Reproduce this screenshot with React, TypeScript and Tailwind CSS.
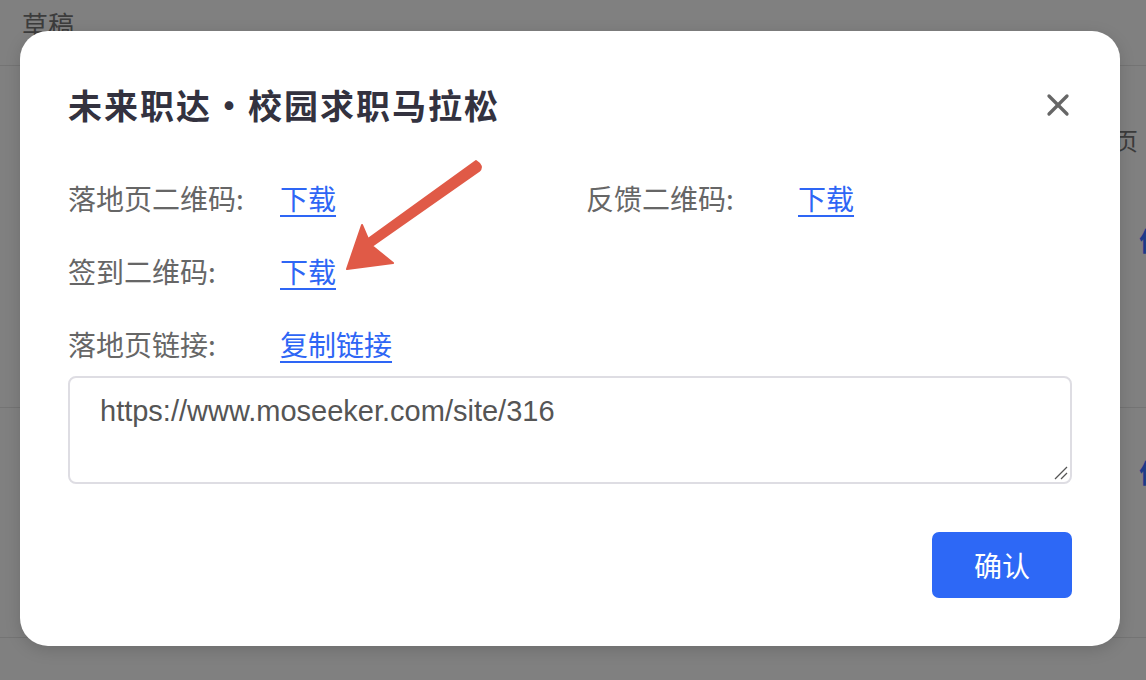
import { X } from "lucide-react";

const cn = '"Noto Sans CJK SC", "Liberation Sans", sans-serif';

const Row = ({ label, link }: { label: string; link: string }) => (
  <div className="flex items-center h-[40px]">
    <span className="w-[212px] text-[28px] text-[#666]">{label}</span>
    <a href="#" className="text-[28px] text-[#2e66f5] underline underline-offset-[5px] decoration-[2px]">
      {link}
    </a>
  </div>
);

export default function App() {
  return (
    <div
      className="relative w-[1146px] h-[680px] overflow-hidden bg-[#808080]"
      style={{ fontFamily: cn }}
    >
      {/* page behind the mask */}
      <div className="flex flex-col">
        <div className="h-[66px] px-[22px] pt-[4px] text-[26px] text-[#3c3c3c] border-b border-[#747474]">草稿</div>
        <div className="h-[342px] border-b border-[#747474] flex flex-col items-end pr-[8px] pt-[56px] text-[24px] text-[#3c3c3c]">
          <span>页</span>
        </div>
        <div className="h-[230px] border-b border-[#747474]" />
      </div>
      <span className="absolute left-[1139px] top-[220px] text-[26px] font-bold text-[#1d3a8a]">信</span>
      <span className="absolute left-[1139px] top-[452px] text-[26px] font-bold text-[#1d3a8a]">信</span>

      {/* modal */}
      <div className="absolute left-[20px] top-[31px] w-[1100px] h-[615px] bg-white rounded-[28px] shadow-[0_4px_16px_rgba(0,0,0,0.15)] px-[48px] pt-[48px]">
        <div className="flex items-center justify-between">
          <h2 className="text-[34px] font-bold text-[#33323f] tracking-[2px]">未来职达・校园求职马拉松</h2>
          <X className="w-[36px] h-[36px] text-[#666] mr-[-4px]" strokeWidth={2.2} />
        </div>
        <div className="mt-[48px] flex flex-col gap-[33px]">
          <div className="flex">
            <div className="w-[518px]">
              <Row label="落地页二维码:" link="下载" />
            </div>
            <Row label="反馈二维码:" link="下载" />
          </div>
          <Row label="签到二维码:" link="下载" />
          <Row label="落地页链接:" link="复制链接" />
        </div>
        <div className="relative mt-[12px] h-[108px] border-2 border-[#dedde3] rounded-[8px] px-[30px] pt-[12px] text-[29px] text-[#555]" style={{ fontFamily: '"Liberation Sans", sans-serif' }}>
          https://www.moseeker.com/site/316
          <svg className="absolute right-[2px] bottom-[2px]" width="14" height="14" viewBox="0 0 14 14">
            <line x1="1" y1="13" x2="13" y2="1" stroke="#555" strokeWidth="1.2" />
            <line x1="7" y1="13" x2="13" y2="7" stroke="#555" strokeWidth="1.2" />
          </svg>
        </div>
        <div className="flex justify-end mt-[48px]">
          <button className="w-[140px] h-[66px] rounded-[7px] bg-[#2d68f6] text-white text-[28px]">确认</button>
        </div>
      </div>

      {/* annotation arrow */}
      <svg className="absolute left-0 top-0" width="1146" height="680" viewBox="0 0 1146 680">
        <path d="M476 161 Q484 166 479 171 L372 246 L393 263 L347 269 L362 225 L368 239 Z" fill="#e05a47" stroke="#e05a47" strokeWidth="2" strokeLinejoin="round" />
      </svg>
    </div>
  );
}
